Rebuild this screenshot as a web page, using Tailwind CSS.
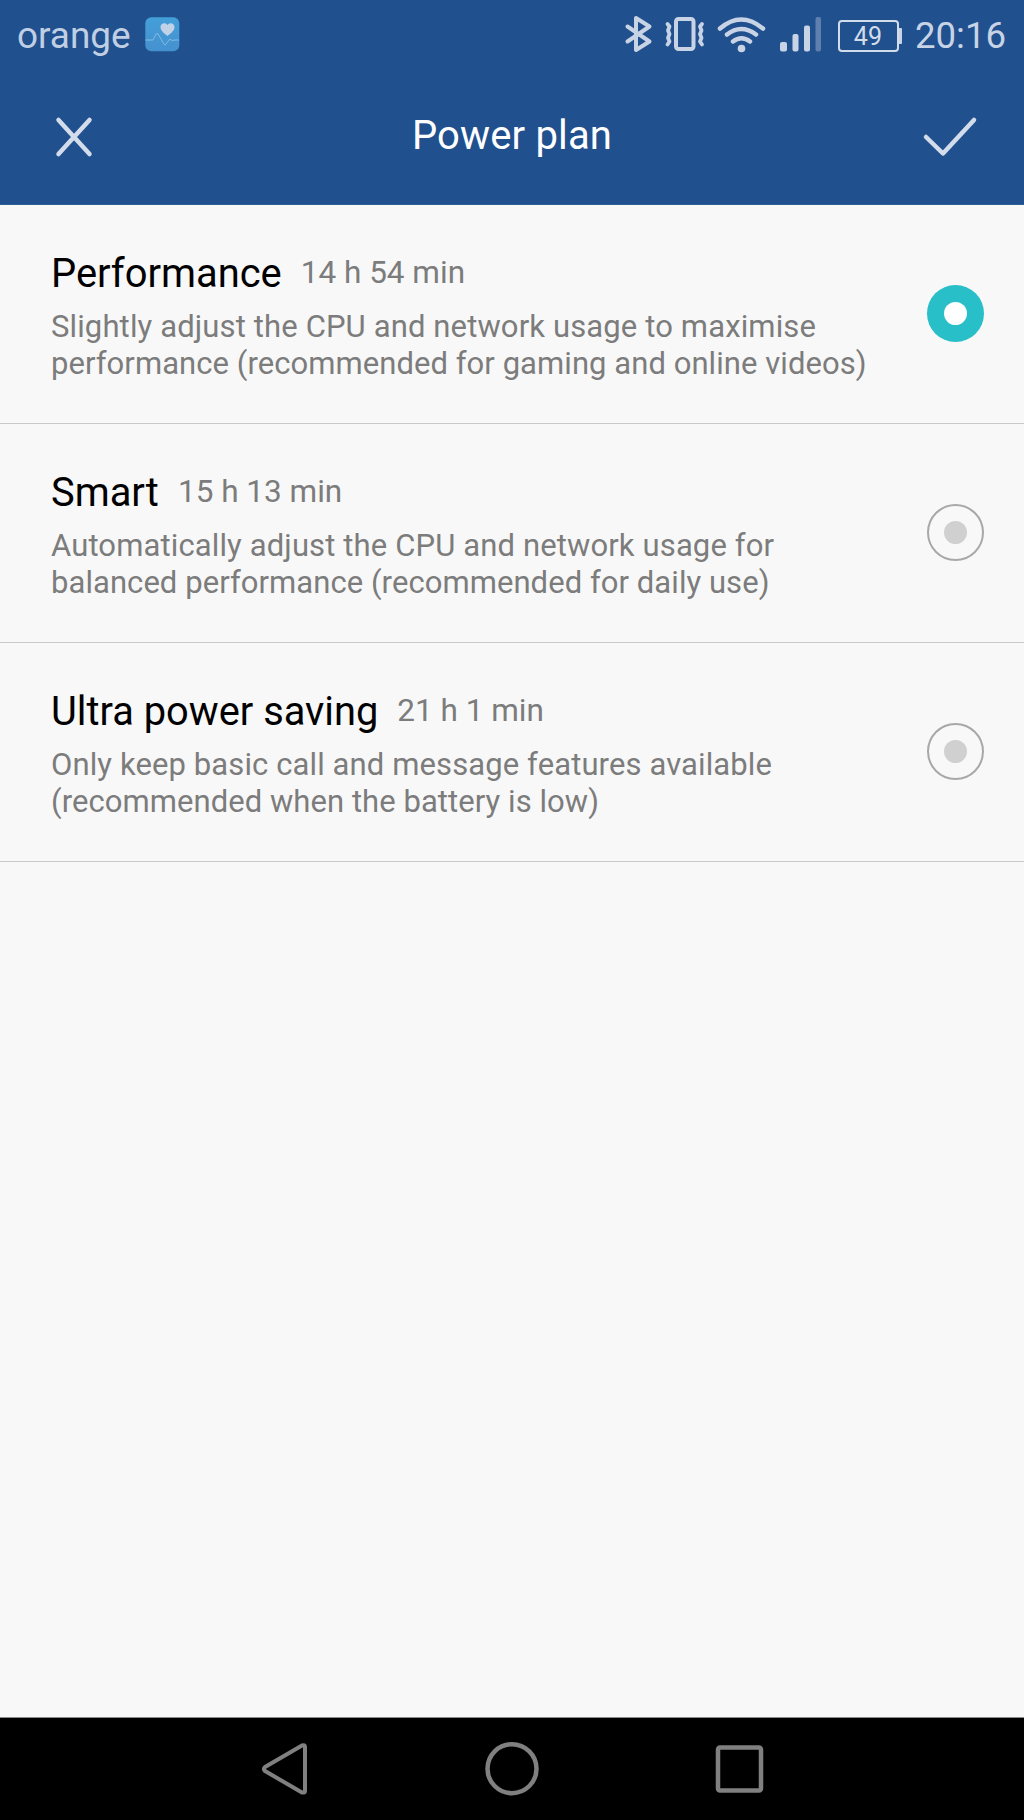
<!DOCTYPE html>
<html lang="en">
<head>
<meta charset="utf-8">
<title>Power plan</title>
<script src="https://cdn.jsdelivr.net/npm/@tailwindcss/browser@4"></script>
</head>
<body class="w-[1024px] h-[1820px] flex flex-col bg-[#f8f8f8] font-['Roboto',sans-serif] overflow-hidden">
  <header class="h-[205px] shrink-0 flex flex-col bg-[#20508e] border-b border-[#2f6093]">
    <!-- Status bar -->
    <div class="h-[70px] flex items-center justify-between pl-[17px] pr-[18px] text-[#c0cfe3]">
      <div class="flex items-center gap-[14px]">
        <span class="text-[36.9px] leading-[70px] mt-px">orange</span>
        <svg class="w-[35px] h-[35px] -mt-px" viewBox="0 0 35 35">
          <defs><linearGradient id="g" x1="0" y1="0" x2="0" y2="1"><stop offset="0" stop-color="#449fd9"/><stop offset="1" stop-color="#4591cf"/></linearGradient></defs>
          <rect x=".3" y=".3" width="34" height="34" rx="6" fill="url(#g)"/>
          <path d="M22.500 19C18.500 15.800 15.500 13.500 15.500 10C15.500 6 20.500 5 22.500 8C24.500 5 29.500 6 29.500 10C29.500 13.500 26.500 15.800 22.500 19Z" fill="#c2d2e6"/>
          <path d="M.5 23H8L11 17Q12 16 13 17L19 27Q20 29 21 27L25 22L27 23.500L30 23H34" fill="none" stroke="#82bae4" stroke-width="1"/>
        </svg>
      </div>
      <div class="flex items-center">
        <svg class="w-[212px] h-[70px]" viewBox="616 0 212 70" fill="none" stroke="#c8d4e5" stroke-linecap="round" stroke-linejoin="round">
          <path d="M627.500 26.500L649.500 41.500L636 50V18L649.500 26.500L627.500 41.500" stroke-width="4"/>
          <rect x="676" y="19" width="17.500" height="30" rx="2.500" stroke-width="4"/>
          <path d="M667.500 24L669.500 26.500L668 30.500L669.500 34L668 38L669.500 41.500L667.500 44.500" stroke-width="3.800"/>
          <path d="M702 24L700 26.500L701.500 30.500L700 34L701.500 38L700 41.500L702 44.500" stroke-width="3.800"/>
          <path d="M720 28.500Q741 10.500 763 28.500M727 34.500Q741 23.500 756 34.500M733 41.500Q741.500 35 750 41.500" stroke-width="4.500"/>
          <circle cx="741.500" cy="48.500" r="3.800" fill="#c8d4e5" stroke="none"/>
          <g fill="#c8d4e5" stroke="none"><rect x="780" y="42" width="7" height="9.500" rx="2"/><rect x="792.500" y="34" width="6" height="17.500" rx="2"/><rect x="804" y="25.500" width="6" height="26" rx="2"/><rect x="815.500" y="17" width="5.500" height="34.500" rx="2" fill="#5f80ae"/></g>
        </svg>
        <div class="ml-[10px] mt-px flex items-center">
          <div class="w-[61px] h-[32px] border-[2.5px] border-[#d3dce9] rounded-[4px] flex items-center justify-center text-[25px] leading-none pt-[2px] pr-[1px] text-[#d3dce9]">49</div>
          <div class="w-[3px] h-[16px] bg-[#c8d4e5] rounded-r-[1px]"></div>
        </div>
        <span class="ml-[13px] mt-px text-[36.6px] leading-[70px] text-[#c8d4e5]">20:16</span>
      </div>
    </div>
    <!-- Action bar -->
    <div class="h-[134px] flex items-start justify-between pt-[45px] pl-[52px] pr-[44px]">
      <svg class="w-[44px] h-[44px]" viewBox="52 115 44 44"><path d="M58.500 120L89.500 154M89.500 120L58.500 154" stroke="#d3dceb" stroke-width="4.500" stroke-linecap="round"/></svg>
      <h1 class="text-[40px] leading-[44px] text-white tracking-[0.15px] -mt-px ml-[8px]">Power plan</h1>
      <svg class="w-[60px] h-[44px]" viewBox="920 115 60 44"><path d="M926 137L943 153.500L974 120" fill="none" stroke="#d3dceb" stroke-width="4.500" stroke-linecap="round" stroke-linejoin="round"/></svg>
    </div>
  </header>

  <main class="flex-1">
    <section class="h-[219px] flex items-start justify-between pl-[51px] pr-[40px] border-b border-[#c9c9c9]">
      <div class="pt-[45px]">
        <div class="flex items-start gap-[19px]"><h2 class="text-[39.9px] leading-[48px] text-black">Performance</h2><span class="text-[31.5px] leading-[46px] text-[#7c7c7c]">14 h 54 min</span></div>
        <p class="mt-[10px] text-[31px] leading-[37px] text-[#7c7c7c] whitespace-nowrap"><span class="tracking-[0.13px]">Slightly adjust the CPU and network usage to maximise</span><br><span class="tracking-[0.06px]">performance (recommended for gaming and online videos)</span></p>
      </div>
      <div class="mt-[80px] size-[57px] rounded-full bg-[#29bfc8] flex items-center justify-center"><div class="size-[23px] rounded-full bg-white"></div></div>
    </section>
    <section class="h-[219px] flex items-start justify-between pl-[51px] pr-[40px] border-b border-[#c9c9c9]">
      <div class="pt-[45px]">
        <div class="flex items-start gap-[19px]"><h2 class="text-[39.9px] leading-[48px] text-black">Smart</h2><span class="text-[31.5px] leading-[46px] text-[#7c7c7c]">15 h 13 min</span></div>
        <p class="mt-[10px] text-[31px] leading-[37px] text-[#7c7c7c] whitespace-nowrap"><span class="tracking-[0.13px]">Automatically adjust the CPU and network usage for</span><br><span class="tracking-[0.06px]">balanced performance (recommended for daily use)</span></p>
      </div>
      <div class="mt-[80px] size-[57px] rounded-full border-2 border-[#a8a8a8] flex items-center justify-center"><div class="size-[23px] rounded-full bg-[#d0d0d0]"></div></div>
    </section>
    <section class="h-[219px] flex items-start justify-between pl-[51px] pr-[40px] border-b border-[#c9c9c9]">
      <div class="pt-[45px]">
        <div class="flex items-start gap-[19px]"><h2 class="text-[39.8px] leading-[48px] text-black">Ultra power saving</h2><span class="text-[31.5px] leading-[46px] text-[#7c7c7c]">21 h 1 min</span></div>
        <p class="mt-[10px] text-[31px] leading-[37px] text-[#7c7c7c] whitespace-nowrap"><span class="tracking-[0.11px]">Only keep basic call and message features available</span><br><span class="tracking-[0.06px]">(recommended when the battery is low)</span></p>
      </div>
      <div class="mt-[80px] size-[57px] rounded-full border-2 border-[#a8a8a8] flex items-center justify-center"><div class="size-[23px] rounded-full bg-[#d0d0d0]"></div></div>
    </section>
  </main>

  <!-- Navigation bar -->
  <nav class="h-[103px] shrink-0 bg-black border-t border-[#8a8a8a] flex items-center justify-between px-[256px]">
    <svg class="w-[56px] h-[60px]" viewBox="256 1739 56 60"><path d="M305 1747Q305 1744.500 302 1745.500L265 1767Q263 1769 265 1771L302 1792.500Q305 1793 305 1791Z" fill="none" stroke="#808080" stroke-width="4" stroke-linejoin="round"/></svg>
    <svg class="w-[60px] h-[60px]" viewBox="482 1739 60 60"><circle cx="512" cy="1768.700" r="24.500" fill="none" stroke="#808080" stroke-width="4.500"/></svg>
    <svg class="w-[56px] h-[60px]" viewBox="712 1739 56 60"><rect x="718" y="1747.500" width="43" height="43" rx="2" fill="none" stroke="#808080" stroke-width="4.500"/></svg>
  </nav>
</body>
</html>
